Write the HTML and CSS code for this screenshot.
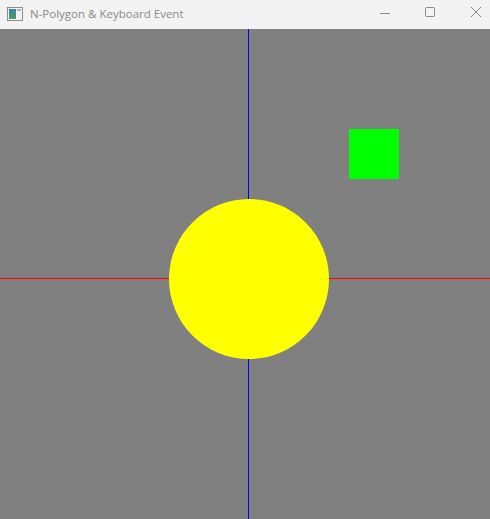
FILE: index.html
```html
<!DOCTYPE html>
<html>
<head>
<meta charset="utf-8">
<link rel="stylesheet" href="styles.css">
</head>
<body>
<div class="window">
  <div class="titlebar">
    <svg class="app-icon" width="16" height="14" viewBox="0 0 16 14">
      <rect x="0.5" y="0.5" width="15" height="13" fill="#f4f4f4" stroke="#8c8c8c"/>
      <defs>
        <linearGradient id="g" x1="0" y1="0" x2="0" y2="1">
          <stop offset="0" stop-color="#3c7fb0"/>
          <stop offset="1" stop-color="#4aa05a"/>
        </linearGradient>
      </defs>
      <rect x="2" y="2" width="7" height="10" fill="url(#g)"/>
      <rect x="10" y="2" width="4" height="2" fill="#9bb7cc"/>
    </svg>
    <span class="title">N-Polygon &amp; Keyboard Event</span>
    <div class="controls">
      <svg class="ctl" width="46" height="29" viewBox="0 0 46 29">
        <line x1="28" y1="14.5" x2="38" y2="14.5" stroke="#8a8a8a" stroke-width="1"/>
      </svg>
      <svg class="ctl" width="46" height="29" viewBox="0 0 46 29">
        <rect x="27.5" y="8.5" width="9" height="9" rx="1" fill="none" stroke="#8a8a8a" stroke-width="1"/>
      </svg>
      <svg class="ctl" width="46" height="29" viewBox="0 0 46 29">
        <path d="M27 8 L37 18 M37 8 L27 18" stroke="#8a8a8a" stroke-width="1"/>
      </svg>
    </div>
  </div>
  <div class="canvas">
    <div class="axis-x"></div>
    <div class="axis-y"></div>
    <div class="circle"></div>
    <div class="square"></div>
  </div>
</div>
</body>
</html>
```
FILE: styles.css
```css
html, body {
  margin: 0;
  padding: 0;
}
body {
  width: 490px;
  height: 519px;
  overflow: hidden;
  font-family: "Open Sans", "Noto Sans", sans-serif;
}
.window {
  display: flex;
  flex-direction: column;
  width: 490px;
  height: 519px;
}
.titlebar {
  height: 29px;
  flex: 0 0 29px;
  background: #f3f3f3;
  display: flex;
  align-items: center;
}
.app-icon {
  margin-left: 7px;
  margin-right: 7px;
  margin-top: -2px;
}
.title {
  font-size: 11.5px;
  color: #8a8a8a;
  margin-top: -2px;
  flex: 1;
  white-space: nowrap;
}
.controls {
  display: flex;
  align-self: stretch;
  margin-top: -1px;
}
.ctl {
  display: block;
}
.canvas {
  position: relative;
  flex: 1;
  background: #808080;
  overflow: hidden;
}
.axis-x {
  position: absolute;
  left: 0;
  right: 0;
  top: 249px;
  height: 1px;
  background: #ff0000;
}
.axis-y {
  position: absolute;
  top: 0;
  bottom: 0;
  left: 248px;
  width: 1px;
  background: #0000ff;
}
.circle {
  position: absolute;
  left: 169px;
  top: 170px;
  width: 160px;
  height: 160px;
  border-radius: 50%;
  background: #ffff00;
}
.square {
  position: absolute;
  left: 349px;
  top: 100px;
  width: 50px;
  height: 50px;
  background: #00ff00;
}
```
